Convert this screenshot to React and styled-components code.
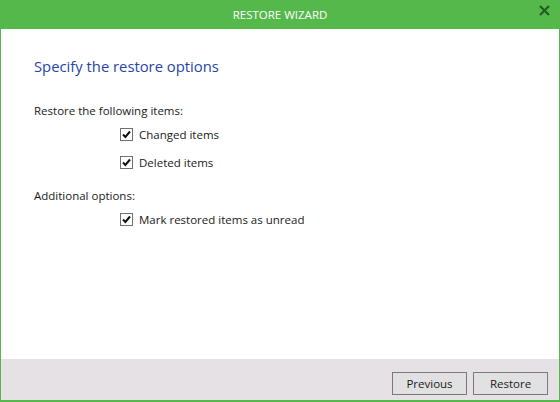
import React from "react";
import styled, { createGlobalStyle } from "styled-components";

const GlobalStyle = createGlobalStyle`
  html, body {
    margin: 0;
    padding: 0;
    background: #ffffff;
  }
  body {
    font-family: "Open Sans", "Noto Sans", sans-serif;
  }
`;

const Window = styled.div`
  width: 560px;
  height: 402px;
  box-sizing: border-box;
  display: flex;
  flex-direction: column;
  border: 1px solid #55b84b;
  border-top: none;
  border-bottom-width: 2px;
  background: #ffffff;
`;

const TitleBar = styled.div`
  height: 29px;
  margin: 0 -1px;
  background: #55b84b;
  color: #ffffff;
  display: flex;
  align-items: center;
  justify-content: center;
  position: relative;
  font-size: 11.5px;
`;

const CloseButton = styled.div`
  position: absolute;
  right: 10px;
  top: 5px;
  width: 11px;
  height: 11px;
  display: flex;
`;

const Body = styled.div`
  flex: 1;
  padding: 27px 0 0 33px;
`;

const Heading = styled.h1`
  margin: 0 0 27px 0;
  font-size: 14.8px;
  font-weight: 400;
  color: #1f45a8;
`;

const Section = styled.div`
  margin-bottom: 17px;
`;

const SectionLabel = styled.div`
  font-size: 11.5px;
  color: #1a1a1a;
  margin-bottom: 8px;
`;

const OptionList = styled.div`
  display: flex;
  flex-direction: column;
  gap: 11px;
  padding-left: 86px;
`;

const Option = styled.label`
  display: flex;
  align-items: center;
  gap: 6px;
  font-size: 11.5px;
  color: #1a1a1a;
  height: 17px;
`;

const Box = styled.span`
  width: 11px;
  height: 11px;
  border: 1px solid #707070;
  background: #ffffff;
  display: flex;
  align-items: center;
  justify-content: center;
`;

const Footer = styled.div`
  height: 41px;
  background: #e6e1e5;
  display: flex;
  justify-content: flex-end;
  align-items: flex-start;
  gap: 6px;
  padding: 13px 11px 0 0;
  box-sizing: border-box;
`;

const Button = styled.button`
  width: 75px;
  height: 23px;
  border: 1px solid #7a7a7a;
  background: #e1e1e1;
  font-family: inherit;
  font-size: 11.5px;
  color: #1a1a1a;
  padding: 0;
`;

const Check = ({ label }) => (
  <Option>
    <Box>
      <svg width="9" height="9" viewBox="0 0 9 9">
        <path d="M1 4.5 L3.4 7 L8 1.5" fill="none" stroke="#111" strokeWidth="2" />
      </svg>
    </Box>
    {label}
  </Option>
);

const App = () => {
  return (
    <>
      <GlobalStyle />
      <Window>
        <TitleBar>
          RESTORE WIZARD
          <CloseButton>
            <svg width="11" height="11" viewBox="0 0 11 11">
              <path d="M1 1 L10 10 M10 1 L1 10" stroke="#1e5e22" strokeWidth="2.2" />
            </svg>
          </CloseButton>
        </TitleBar>
        <Body>
          <Heading>Specify the restore options</Heading>
          <Section>
            <SectionLabel>Restore the following items:</SectionLabel>
            <OptionList>
              <Check label="Changed items" />
              <Check label="Deleted items" />
            </OptionList>
          </Section>
          <Section>
            <SectionLabel>Additional options:</SectionLabel>
            <OptionList>
              <Check label="Mark restored items as unread" />
            </OptionList>
          </Section>
        </Body>
        <Footer>
          <Button>Previous</Button>
          <Button>Restore</Button>
        </Footer>
      </Window>
    </>
  );
};

export default App;
